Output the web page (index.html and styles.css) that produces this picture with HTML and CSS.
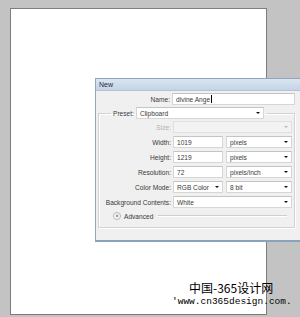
FILE: index.html
```html
<!DOCTYPE html>
<html lang="en">
<head>
    <meta charset="UTF-8">
    <meta name="viewport" content="width=device-width, initial-scale=1.0">
    <title>New Document</title>
    <link rel="stylesheet" href="styles.css">
</head>
<body>
    <div class="workspace">
        <div class="canvas"></div>

        <div class="dialog">
            <div class="titlebar">New</div>
            <div class="dialog-body">
                <div class="row name-row">
                    <label>Name:</label>
                    <div class="input">divine Ange<span class="caret"></span></div>
                </div>

                <fieldset class="preset">
                    <legend>
                        <label>Preset:</label>
                        <div class="select preset-select">Clipboard<span class="arrow"></span></div>
                    </legend>

                    <div class="row disabled">
                        <label>Size:</label>
                        <div class="select"><span class="arrow"></span></div>
                    </div>
                    <div class="row">
                        <label>Width:</label>
                        <div class="pair">
                            <div class="input">1019</div>
                            <div class="select">pixels<span class="arrow"></span></div>
                        </div>
                    </div>
                    <div class="row">
                        <label>Height:</label>
                        <div class="pair">
                            <div class="input">1219</div>
                            <div class="select">pixels<span class="arrow"></span></div>
                        </div>
                    </div>
                    <div class="row">
                        <label>Resolution:</label>
                        <div class="pair">
                            <div class="input">72</div>
                            <div class="select">pixels/inch<span class="arrow"></span></div>
                        </div>
                    </div>
                    <div class="row">
                        <label>Color Mode:</label>
                        <div class="pair">
                            <div class="select">RGB Color<span class="arrow"></span></div>
                            <div class="select">8 bit<span class="arrow"></span></div>
                        </div>
                    </div>
                    <div class="row">
                        <label>Background Contents:</label>
                        <div class="select">White<span class="arrow"></span></div>
                    </div>

                    <div class="advanced">
                        <span class="toggle">&raquo;</span>
                        <span>Advanced</span>
                        <span class="rule"></span>
                    </div>
                </fieldset>
            </div>
        </div>

        <div class="watermark">
            <div class="wm-title">中国-365设计网</div>
            <div class="wm-url">'www.cn365design.com.</div>
        </div>
    </div>
</body>
</html>
```

FILE: styles.css
```css
body {
    margin: 0;
    background: #c3c3c3;
    font-family: "Liberation Sans", Arial, sans-serif;
}
.workspace {
    position: relative;
    width: 300px;
    height: 317px;
    overflow: hidden;
    padding: 8px 0 0 10px;
    box-sizing: border-box;
}
.canvas {
    width: 257px;
    height: 307px;
    box-sizing: border-box;
    background: #fff;
    border: 1px solid #7d7d7d;
}

/* dialog */
.dialog {
    position: absolute;
    left: 95px;
    top: 78px;
    width: 215px;
    height: 164px;
    box-sizing: border-box;
    background: #f0f0f0;
    border: 1px solid #90a6bf;
    border-bottom: 2px solid #8aa2bb;
    font-size: 6.6px;
    color: #3a3a3a;
}
.titlebar {
    height: 11px;
    line-height: 11px;
    padding-left: 3px;
    font-size: 7px;
    background: linear-gradient(#dbe5f1, #c3d3e7);
    color: #1e2a3a;
    border-bottom: 1px solid #b3c4d8;
}
.dialog-body {
    padding-top: 2px;
}
.row {
    display: grid;
    grid-template-columns: 73px 119px;
    column-gap: 1px;
    align-items: center;
    height: 12px;
    margin-bottom: 3px;
}
.row label {
    text-align: right;
    padding-right: 1px;
}
.name-row {
    grid-template-columns: 75px 123px;
    margin-bottom: 2px;
}
.input,
.select {
    position: relative;
    height: 12px;
    line-height: 11px;
    box-sizing: border-box;
    padding-left: 3px;
    background: #fff;
    border: 1px solid #d6d6d6;
    border-top-color: #c4c4c4;
    white-space: nowrap;
}
.caret {
    display: inline-block;
    width: 1px;
    height: 8px;
    margin-left: 1px;
    vertical-align: -1px;
    background: #000;
}
.arrow {
    position: absolute;
    right: 3px;
    top: 4px;
    border-left: 2px solid transparent;
    border-right: 2px solid transparent;
    border-top: 2px solid #111;
}
.pair {
    display: grid;
    grid-template-columns: 50px 66px;
    column-gap: 3px;
}
.disabled label {
    color: #b0b0b0;
}
.disabled .select {
    background: #f3f3f3;
    border-color: #e0e0e0;
}
.disabled .arrow {
    border-top-color: #b8b8b8;
}

/* preset group */
.preset {
    width: 197px;
    margin: 0 0 0 2px;
    padding: 2px 0 6px;
    box-sizing: border-box;
    border: 1px solid #d3d3d3;
    box-shadow: inset 1px 1px 0 #fff, 1px 1px 0 #fff;
}
.preset legend {
    display: flex;
    align-items: center;
    gap: 2px;
    margin-left: 12px;
    padding: 0 2px;
    height: 12px;
}
.preset-select {
    width: 128px;
}
.advanced {
    display: flex;
    align-items: center;
    gap: 3px;
    height: 10px;
    margin: 2px 7px 0 14px;
}
.toggle {
    width: 8px;
    height: 8px;
    box-sizing: border-box;
    border: 1px solid #b5b5b5;
    border-radius: 50%;
    background: #fafafa;
    color: #222;
    font-size: 6px;
    line-height: 5px;
    text-align: center;
    transform: rotate(90deg);
}
.rule {
    flex: 1;
    margin-left: 2px;
    border-top: 1px solid #cfcfcf;
    border-bottom: 1px solid #fff;
}

/* watermark */
.watermark {
    position: absolute;
    left: 172px;
    top: 282px;
    color: #000;
    line-height: 1;
}
.wm-title {
    margin-left: 17px;
    font-family: "Noto Sans CJK SC", sans-serif;
    font-size: 12px;
}
.wm-url {
    margin-top: 3px;
    font-family: "Liberation Mono", monospace;
    font-size: 9.5px;
}
```
